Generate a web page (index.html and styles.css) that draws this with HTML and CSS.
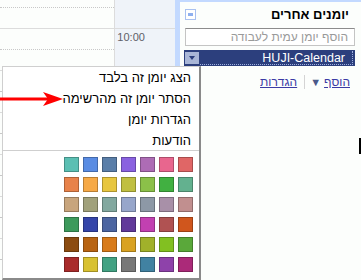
FILE: index.html
```html
<!DOCTYPE html>
<html lang="he">
<head>
    <meta charset="UTF-8">
    <title>יומנים אחרים</title>
    <link rel="stylesheet" href="styles.css">
</head>
<body>
<div class="page">
    <div class="cal">
        <div class="cal__day">
            <div class="hour"><div class="hour__half"></div></div>
            <div class="hour"><div class="hour__half"></div></div>
            <div class="hour"><div class="hour__half"></div></div>
            <div class="hour"><div class="hour__half"></div></div>
            <div class="hour"><div class="hour__half"></div></div>
            <div class="hour"><div class="hour__half"></div></div>
            <div class="hour"><div class="hour__half"></div></div>
        </div>
        <div class="cal__time">
            <div class="hour"></div>
            <div class="hour"><span class="hour__label">10:00</span></div>
            <div class="hour"></div>
            <div class="hour"></div>
            <div class="hour"></div>
            <div class="hour"></div>
            <div class="hour"></div>
        </div>
    </div>
    <div class="side" dir="rtl">
        <div class="side__head">
            <span class="side__title">יומנים אחרים</span>
            <span class="side__toggle"></span>
        </div>
        <input class="side__input" type="text" placeholder="הוסף יומן עמית לעבודה">
        <div class="cal-item">
            <span class="cal-item__name">HUJI-Calendar</span>
            <span class="cal-item__menu"></span>
        </div>
        <div class="side__links">
            <a href="#">הוסף</a>
            <span class="side__arrow">&#9660;</span>
            <span class="side__sep"></span>
            <a href="#">הגדרות</a>
        </div>
    </div>
</div>

<!-- תפריט היומן -->
<div class="menu" dir="rtl">
    <div class="menu__item">הצג יומן זה בלבד</div>
    <div class="menu__item">הסתר יומן זה מהרשימה</div>
    <div class="menu__item">הגדרות יומן</div>
    <div class="menu__item">הודעות</div>
    <div class="menu__colors" dir="ltr">
        <span class="swatch" style="background:#5bbfb3"></span>
        <span class="swatch" style="background:#5a8ce3"></span>
        <span class="swatch" style="background:#5a7ea8"></span>
        <span class="swatch" style="background:#8a62e0"></span>
        <span class="swatch" style="background:#ad6cb5"></span>
        <span class="swatch" style="background:#e8668e"></span>
        <span class="swatch" style="background:#e06666"></span>

        <span class="swatch" style="background:#e8824a"></span>
        <span class="swatch" style="background:#f6a946"></span>
        <span class="swatch" style="background:#e7c63f"></span>
        <span class="swatch" style="background:#c0bf41"></span>
        <span class="swatch" style="background:#8bc049"></span>
        <span class="swatch" style="background:#41b041"></span>
        <span class="swatch" style="background:#63b18f"></span>

        <span class="swatch" style="background:#c8a57d"></span>
        <span class="swatch" style="background:#a1a17b"></span>
        <span class="swatch" style="background:#82a89f"></span>
        <span class="swatch" style="background:#97a6cb"></span>
        <span class="swatch" style="background:#8d98a6"></span>
        <span class="swatch" style="background:#a890a8"></span>
        <span class="swatch" style="background:#c18f8f"></span>

        <span class="swatch" style="background:#3d9a5c"></span>
        <span class="swatch" style="background:#3545a9"></span>
        <span class="swatch" style="background:#4c65a1"></span>
        <span class="swatch" style="background:#61399a"></span>
        <span class="swatch" style="background:#c240b1"></span>
        <span class="swatch" style="background:#b05252"></span>
        <span class="swatch" style="background:#d0561d"></span>

        <span class="swatch" style="background:#8c4c11"></span>
        <span class="swatch" style="background:#b86413"></span>
        <span class="swatch" style="background:#d87b1a"></span>
        <span class="swatch" style="background:#d9a222"></span>
        <span class="swatch" style="background:#a1b12a"></span>
        <span class="swatch" style="background:#82c021"></span>
        <span class="swatch" style="background:#5aa83a"></span>

        <span class="swatch" style="background:#a92b2b"></span>
        <span class="swatch" style="background:#d8c131"></span>
        <span class="swatch" style="background:#42a283"></span>
        <span class="swatch" style="background:#787878"></span>
        <span class="swatch" style="background:#4182a2"></span>
        <span class="swatch" style="background:#8e42aa"></span>
        <span class="swatch" style="background:#ab2a79"></span>
    </div>
</div>

<!-- חץ הסימון -->
<svg class="pointer" width="66" height="18" viewBox="0 90 66 18">
    <line x1="0" y1="99" x2="50" y2="99" stroke="#f00" stroke-width="3"/>
    <polygon points="63,99 43,92 48,99 43,106" fill="#f00"/>
</svg>
<span class="cursor"></span>
</body>
</html>
```

FILE: styles.css
```css
body {
    margin: 0;
    width: 361px;
    height: 280px;
    overflow: hidden;
    font-family: "Liberation Sans", "DejaVu Sans", Arial, sans-serif;
    background: #fcfefc;
}
.page {
    display: flex;
    height: 280px;
}

/* calendar grid */
.cal {
    display: flex;
    width: 176px;
    overflow: hidden;
}
.cal__day {
    width: 115px;
    border-right: 1px solid #dcdcdc;
}
.cal__time {
    width: 60px;
    background: #eff3f9;
}
.hour {
    box-sizing: border-box;
    height: 42px;
    border-bottom: 1px solid #dcdcdc;
}
.hour:first-child {
    margin-top: -13px;
}
.hour__half {
    box-sizing: border-box;
    height: 21px;
    border-bottom: 1px dotted #c8c8c8;
}
.hour__label {
    display: block;
    padding: 2px 0 0 2px;
    font-size: 11px;
    line-height: 13px;
    color: #5e6068;
}

/* side panel */
.side {
    flex: 1;
    border-left: 5px solid #c3d9ff;
    border-top: 2px solid #c3d9ff;
    padding: 0 6px 0 5px;
    background: #fcfefc;
}
.side__head {
    display: flex;
    align-items: center;
    justify-content: space-between;
    height: 24px;
}
.side__title {
    padding-right: 6px;
    font-size: 13px;
    font-weight: bold;
    color: #000;
}
.side__toggle {
    position: relative;
    box-sizing: border-box;
    width: 11px;
    height: 11px;
    border: 1px solid #a9c1f0;
    background: #fff;
}
.side__toggle:after {
    content: "";
    position: absolute;
    left: 2px;
    top: 3px;
    width: 5px;
    height: 3px;
    background: #8fb0ee;
}
.side__input {
    display: block;
    box-sizing: border-box;
    width: 170px;
    height: 18px;
    margin: 2px 0 0;
    padding: 0 6px;
    border: 1px solid #c4c4c4;
    border-top-color: #8c8c8c;
    font-family: inherit;
    font-size: 12px;
    background: #fff;
    outline: none;
}
.side__input::placeholder {
    color: #9a9a9a;
}
.cal-item {
    display: flex;
    align-items: center;
    height: 16px;
    margin: 4px 0 0 -1px;
    padding: 0 2px 0 0;
    width: 171px;
    box-sizing: border-box;
    background: #2c3f7d;
}
.cal-item__name {
    flex: 1;
    box-sizing: border-box;
    height: 14px;
    padding-right: 7px;
    margin-left: 1px;
    border-right: 1px dotted #9fb0e0;
    border-bottom: 1px dotted #9fb0e0;
    font-size: 12.5px;
    line-height: 14px;
    color: #fff;
}
.cal-item__menu {
    position: relative;
    width: 14px;
    height: 12px;
    margin-left: 1px;
    background: #a9b6d7;
}
.cal-item__menu:after {
    content: "";
    position: absolute;
    left: 4px;
    top: 4px;
    border-left: 3px solid transparent;
    border-right: 3px solid transparent;
    border-top: 4px solid #2c3f7d;
}
.side__links {
    display: flex;
    align-items: center;
    height: 16px;
    margin-top: 8px;
    padding-right: 5px;
    font-size: 12px;
}
.side__links a {
    color: #3b3ba5;
}
.side__arrow {
    margin-right: 3px;
    font-size: 11px;
    color: #4a5a8a;
}
.side__sep {
    width: 1px;
    height: 14px;
    margin: 0 5px 0 7px;
    background: #d4d4d4;
}

/* popup menu */
.menu {
    position: absolute;
    left: 2px;
    top: 66px;
    box-sizing: border-box;
    width: 199px;
    height: 214px;
    border: 1px solid #cfcfcf;
    border-right: 2px solid #8a8a8a;
    border-bottom: 2px solid #8a8a8a;
    background: #fff;
}
.menu__item {
    padding: 0 8px;
    font-size: 13px;
    line-height: 21px;
    color: #000;
    cursor: pointer;
}
.menu__colors {
    display: grid;
    grid-template-columns: repeat(7, 15px);
    grid-auto-rows: 15px;
    column-gap: 4px;
    row-gap: 5px;
    justify-content: end;
    margin-top: -1px;
    padding: 6px 6px 0 0;
    border-top: 1px solid #cfcfcf;
}
.swatch {
    box-sizing: border-box;
    border: 1px solid rgba(0, 0, 0, 0.25);
    cursor: pointer;
}

/* overlays */
.pointer {
    position: absolute;
    left: 0;
    top: 90px;
}
.cursor {
    position: absolute;
    left: 359px;
    top: 138px;
    width: 2px;
    height: 16px;
    background: #000;
}
```
